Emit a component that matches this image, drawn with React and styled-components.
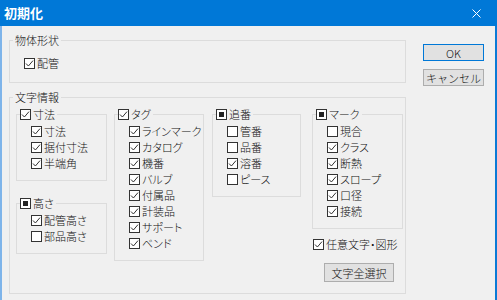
import styled, { createGlobalStyle } from 'styled-components';

const GlobalStyle = createGlobalStyle`
  * { box-sizing: border-box; }
  html, body { margin: 0; background: #f0f0f0; }
  body {
    font-family: "Noto Sans CJK JP", "Noto Sans", sans-serif;
    font-size: 11px;
    font-weight: 300;
    color: #111;
    font-feature-settings: "palt";
  }
`;

const groups = {
  sunpo: { title: '寸法', state: 'on', items: [['寸法', 'on'], ['据付寸法', 'on'], ['半端角', 'on']] },
  takasa: { title: '高さ', state: 'mixed', items: [['配管高さ', 'on'], ['部品高さ', 'off']] },
  tag: {
    title: 'タグ',
    state: 'on',
    items: [['ラインマーク', 'on'], ['カタログ', 'on'], ['機番', 'on'], ['バルブ', 'on'], ['付属品', 'on'], ['計装品', 'on'], ['サポート', 'on'], ['ベンド', 'on']],
  },
  oiban: { title: '追番', state: 'mixed', items: [['管番', 'off'], ['品番', 'off'], ['溶番', 'on'], ['ピース', 'off']] },
  mark: {
    title: 'マーク',
    state: 'mixed',
    items: [['現合', 'off'], ['クラス', 'on'], ['断熱', 'on'], ['スロープ', 'on'], ['口径', 'on'], ['接続', 'on']],
  },
};

function Check({ state, children }) {
  return (
    <CheckLabel>
      <Box>
        {state === 'on' && (
          <svg width="9" height="9" viewBox="0 0 9 9">
            <polyline points="1,4.5 3.4,7 8,1.6" fill="none" stroke="#333" strokeWidth="1" />
          </svg>
        )}
        {state === 'mixed' && <Fill />}
      </Box>
      <span>{children}</span>
    </CheckLabel>
  );
}

function SubGroup({ group, $top }) {
  return (
    <SubBox $top={$top}>
      <SubLegend>
        <Check state={group.state}>{group.title}</Check>
      </SubLegend>
      <Items>
        {group.items.map(([label, state]) => (
          <Row key={label}>
            <Check state={state}>{label}</Check>
          </Row>
        ))}
      </Items>
    </SubBox>
  );
}

export default function App() {
  return (
    <>
      <GlobalStyle />
      <Window>
        <TitleBar>
          <Title>初期化</Title>
          <svg width="9" height="9" viewBox="0 0 9 9">
            <path d="M0.5 0.5 L8.5 8.5 M8.5 0.5 L0.5 8.5" stroke="#fff" strokeWidth="1" />
          </svg>
        </TitleBar>
        <Body>
          <Main>
            <Group>
              <Legend>物体形状</Legend>
              <ShapeRow>
                <Check state="on">配管</Check>
              </ShapeRow>
            </Group>
            <Group $text>
              <Legend>文字情報</Legend>
              <Columns>
                <Column $w={91}>
                  <SubGroup group={groups.sunpo} />
                  <SubGroup group={groups.takasa} $top={16} />
                </Column>
                <Column $w={90} $ml={7}>
                  <SubGroup group={groups.tag} />
                </Column>
                <Column $w={89} $ml={8}>
                  <SubGroup group={groups.oiban} />
                </Column>
                <Column $w={91} $ml={11}>
                  <SubGroup group={groups.mark} />
                  <FreeRow>
                    <Check state="on">任意文字・図形</Check>
                  </FreeRow>
                  <Button $w={70} $h={19} $ml={12}>文字全選択</Button>
                </Column>
              </Columns>
            </Group>
          </Main>
          <Side>
            <Button $primary $w={61} $h={17}>OK</Button>
            <Button $w={61} $h={17}>キャンセル</Button>
          </Side>
        </Body>
      </Window>
    </>
  );
}

const Window = styled.div`
  width: 497px;
  height: 300px;
  overflow: hidden;
  background: #f0f0f0;
`;

const TitleBar = styled.div`
  height: 26px;
  background: #0078d7;
  display: flex;
  align-items: center;
  justify-content: space-between;
  padding: 0 16px 0 4px;
`;

const Title = styled.div`
  color: #fff;
  font-weight: bold;
  font-size: 13px;
  line-height: 16px;
`;

const Body = styled.div`
  height: 274px;
  display: flex;
  gap: 17px;
  padding: 7px 0 0 7px;
  border-left: 2px solid #7eb4ea;
  border-right: 2px solid #0a7ad6;
`;

const Main = styled.div`
  width: 397px;
  display: flex;
  flex-direction: column;
  gap: 7px;
`;

const Group = styled.fieldset`
  margin: 0;
  min-width: 0;
  border: 1px solid #dcdcdc;
  padding: ${p => (p.$text ? '4px 0 11px 3px' : '8px 0 11px 3px')};
`;

const Legend = styled.legend`
  padding: 0 2px;
  line-height: 14px;
  font-size: 11px;
`;

const ShapeRow = styled.div`
  height: 16px;
  display: flex;
  align-items: center;
  padding-left: 11px;
`;

const Columns = styled.div`
  display: flex;
  align-items: flex-start;
  margin-left: 3px;
`;

const Column = styled.div`
  width: ${p => p.$w}px;
  margin-left: ${p => p.$ml || 0}px;
  display: flex;
  flex-direction: column;
`;

const SubBox = styled.fieldset`
  margin: ${p => p.$top || 0}px 0 0 0;
  min-width: 0;
  border: 1px solid #dcdcdc;
  padding: 3px 0 9px 3px;
`;

const SubLegend = styled.legend`
  padding: 0 2px 0 0;
  line-height: 12px;
  height: 12px;
  display: flex;
  align-items: center;
`;

const Items = styled.div`
  padding-left: 11px;
`;

const Row = styled.div`
  height: 16px;
  display: flex;
  align-items: center;
`;

const FreeRow = styled.div`
  height: 16px;
  margin: 7px 0 0 1px;
  display: flex;
  align-items: center;
`;

const CheckLabel = styled.span`
  display: inline-flex;
  align-items: center;
  gap: 2px;
  white-space: nowrap;
  line-height: 12px;
`;

const Box = styled.span`
  width: 11px;
  height: 11px;
  border: 1px solid #333;
  background: #fff;
  display: inline-flex;
  align-items: center;
  justify-content: center;
  flex: none;
`;

const Fill = styled.span`
  width: 5px;
  height: 5px;
  background: #222;
`;

const Side = styled.div`
  display: flex;
  flex-direction: column;
  gap: 8px;
  padding-top: 11px;
`;

const Button = styled.button`
  width: ${p => p.$w}px;
  height: ${p => p.$h}px;
  margin: ${p => (p.$ml ? `11px 0 0 ${p.$ml}px` : 0)};
  padding: 0;
  font-family: inherit;
  font-size: 11px;
  font-weight: 300;
  line-height: 12px;
  color: #111;
  background: #e1e1e1;
  border: 1px solid ${p => (p.$primary ? '#0078d7' : '#adadad')};
  border-radius: 0;
`;
